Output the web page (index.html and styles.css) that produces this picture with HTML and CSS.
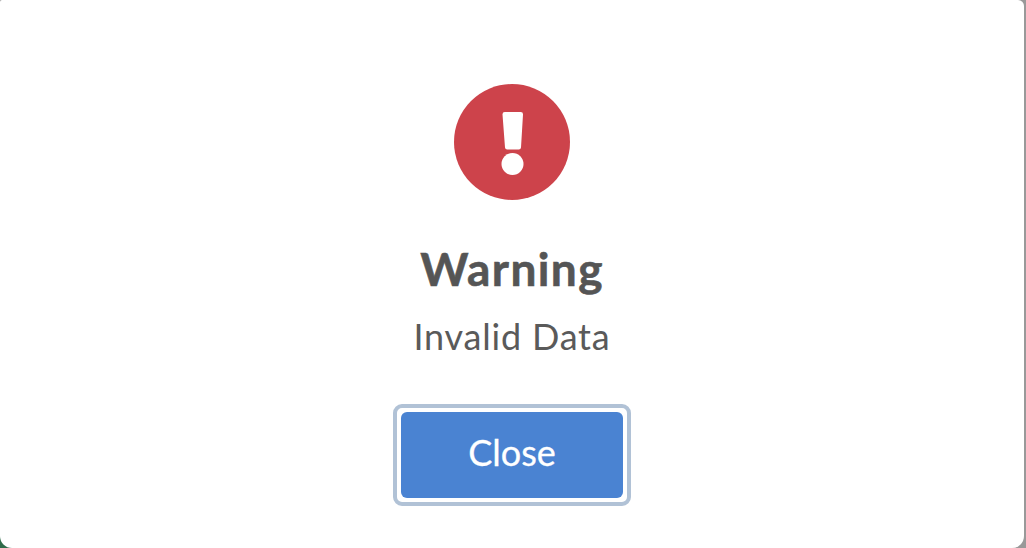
FILE: index.html
```html
<!DOCTYPE html>
<html>

	<head>
		<meta charset="utf-8" />
		<title>Warning</title>
		<link rel="stylesheet" href="styles.css">
	</head>

	<body>
		<div class="corner"></div>
		<div class="popup">
			<svg class="popup-icon" viewBox="0 0 116 116" width="116" height="116">
				<circle cx="58" cy="58" r="58" fill="#cd434b" />
				<path d="M48.500 30.500Q48.300 28 50.800 28H66.700Q69.200 28 69 30.500L67 63.500Q66.800 65.500 64.800 65.500H53.200Q51.200 65.500 51 63.500Z" fill="#fff" />
				<circle cx="58.500" cy="80" r="11" fill="#fff" />
			</svg>
			<h2 class="popup-tit">Warning</h2>
			<p class="popup-text">Invalid Data</p>
			<div class="popup-ring">
				<button class="popup-btn">Close</button>
			</div>
		</div>
	</body>

</html>
```

FILE: styles.css
```css
* {
	padding: 0;
	margin: 0;
}

html,
body {
	height: 100%;
}

body {
	background: #999;
	overflow: hidden;
	font-family: "Lato", "Liberation Sans", sans-serif;
}

/*left bottom corner of the page behind*/
.corner {
	position: absolute;
	left: 0;
	bottom: 0;
	width: 12px;
	height: 12px;
	background: #2f6b4a;
}

.popup {
	position: relative;
	display: flex;
	flex-direction: column;
	align-items: center;
	width: 1024px;
	height: 548px;
	padding-top: 84px;
	box-sizing: border-box;
	background: #fff;
	border-radius: 2px 6px 12px 12px;
}

.popup-icon {
	display: block;
}

.popup-tit {
	margin-top: 41px;
	font-size: 46px;
	line-height: 56px;
	font-weight: 700;
	letter-spacing: 1.4px;
	-webkit-text-stroke: 0.6px #555;
	color: #555;
}

.popup-text {
	margin-top: 17px;
	font-size: 36px;
	line-height: 44px;
	letter-spacing: 0.8px;
	color: #5a5a5a;
}

.popup-ring {
	display: flex;
	margin-top: 46px;
	padding: 4px;
	border: 4px solid #b1c2d6;
	border-radius: 9px;
	background: #fff;
}

.popup-btn {
	width: 222px;
	height: 86px;
	padding-bottom: 6px;
	border: none;
	border-radius: 6px;
	background: #4a83d2;
	font-family: inherit;
	font-size: 36px;
	-webkit-text-stroke: 0.3px #fff;
	color: #fff;
}
```
